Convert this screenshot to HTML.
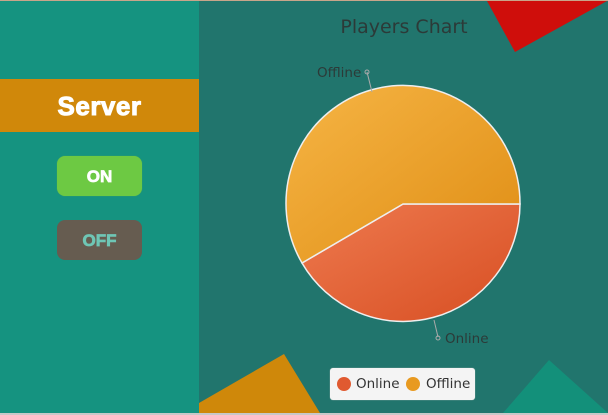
<!DOCTYPE html>
<html><head><meta charset="utf-8"><style>
html,body{margin:0;padding:0;width:608px;height:415px;overflow:hidden;background:#21756d;font-family:"Liberation Sans",sans-serif}
.top{position:absolute;left:0;top:0;width:608px;height:1px;background:#c9a58a}
.bot{position:absolute;left:0;top:413px;width:608px;height:2px;background:#c8c8c8}
.left{position:absolute;left:0;top:1px;width:199px;height:412px;background:#159380}
.banner{position:absolute;left:0;top:79px;width:199px;height:53px;background:#d0880a;color:#fff;font-weight:bold;font-size:26px;text-align:center;line-height:55px;letter-spacing:0.5px;-webkit-text-stroke:1px #fff}
.btn{position:absolute;left:57px;width:85px;height:40px;border-radius:8px;font-weight:bold;font-size:17px;text-align:center;line-height:41px}
.on{top:156px;background:#6dc943;color:#fff;box-shadow:0 0 1px #5a5;-webkit-text-stroke:0.7px #fff}
.off{top:220px;background:#665c50;color:#6fc6b5;-webkit-text-stroke:0.7px #6fc6b5}
.legend{position:absolute;left:330px;top:368px;width:145px;height:32px;background:#f4f4f4;border-radius:3px;box-shadow:0 0 1px #bbb;font-family:"DejaVu Sans","Liberation Sans",sans-serif;font-size:13.5px;color:#333;line-height:32px}
.dot{position:absolute;top:9px;width:14px;height:14px;border-radius:50%}
</style></head><body>
<div class="left"></div>
<svg style="position:absolute;left:0;top:0" width="608" height="415">
<defs>
<linearGradient id="go" x1="0" y1="0" x2="1" y2="1"><stop offset="0" stop-color="#f6b545"/><stop offset="1" stop-color="#df8d14"/></linearGradient>
<linearGradient id="gr" x1="0" y1="0" x2="1" y2="1"><stop offset="0" stop-color="#ee7a4f"/><stop offset="1" stop-color="#d74e22"/></linearGradient>
</defs>
<polygon points="487,1 607,1 515,52" fill="#cf0e0b"/>
<polygon points="199,403 284,354 320,413 199,413" fill="#cf880a"/>
<polygon points="503,413 549,360 608,413" fill="#13907a"/>
<text x="404" y="33" text-anchor="middle" font-family="DejaVu Sans, Liberation Sans, sans-serif" font-size="19" fill="#2c3a38">Players Chart</text>
<path d="M403,204 L520,204 A117,118 0 0 1 302,263 Z" fill="url(#gr)" stroke="#eee" stroke-width="1.5"/>
<path d="M403,204 L302,263 A117,118 0 1 1 520,204 Z" fill="url(#go)" stroke="#eee" stroke-width="1.5"/>
<line x1="367" y1="72" x2="372" y2="92" stroke="#aaa"/>
<circle cx="367" cy="72" r="2" fill="none" stroke="#aaa"/>
<text x="317" y="77" font-family="DejaVu Sans, Liberation Sans, sans-serif" font-size="13.5" fill="#2c3a38">Offline</text>
<line x1="434" y1="320" x2="438" y2="337" stroke="#aaa"/>
<circle cx="438" cy="338" r="2" fill="none" stroke="#aaa"/>
<text x="445" y="343" font-family="DejaVu Sans, Liberation Sans, sans-serif" font-size="13.5" fill="#2c3a38">Online</text>
</svg>
<div class="banner">Server</div>
<div class="btn on">ON</div>
<div class="btn off">OFF</div>
<div class="legend">
<div class="dot" style="left:7px;background:#e05a30"></div><span style="position:absolute;left:26px">Online</span>
<div class="dot" style="left:76px;background:#e89a20"></div><span style="position:absolute;left:96px">Offline</span>
</div>
<div class="top"></div><div class="bot"></div>
</body></html>
